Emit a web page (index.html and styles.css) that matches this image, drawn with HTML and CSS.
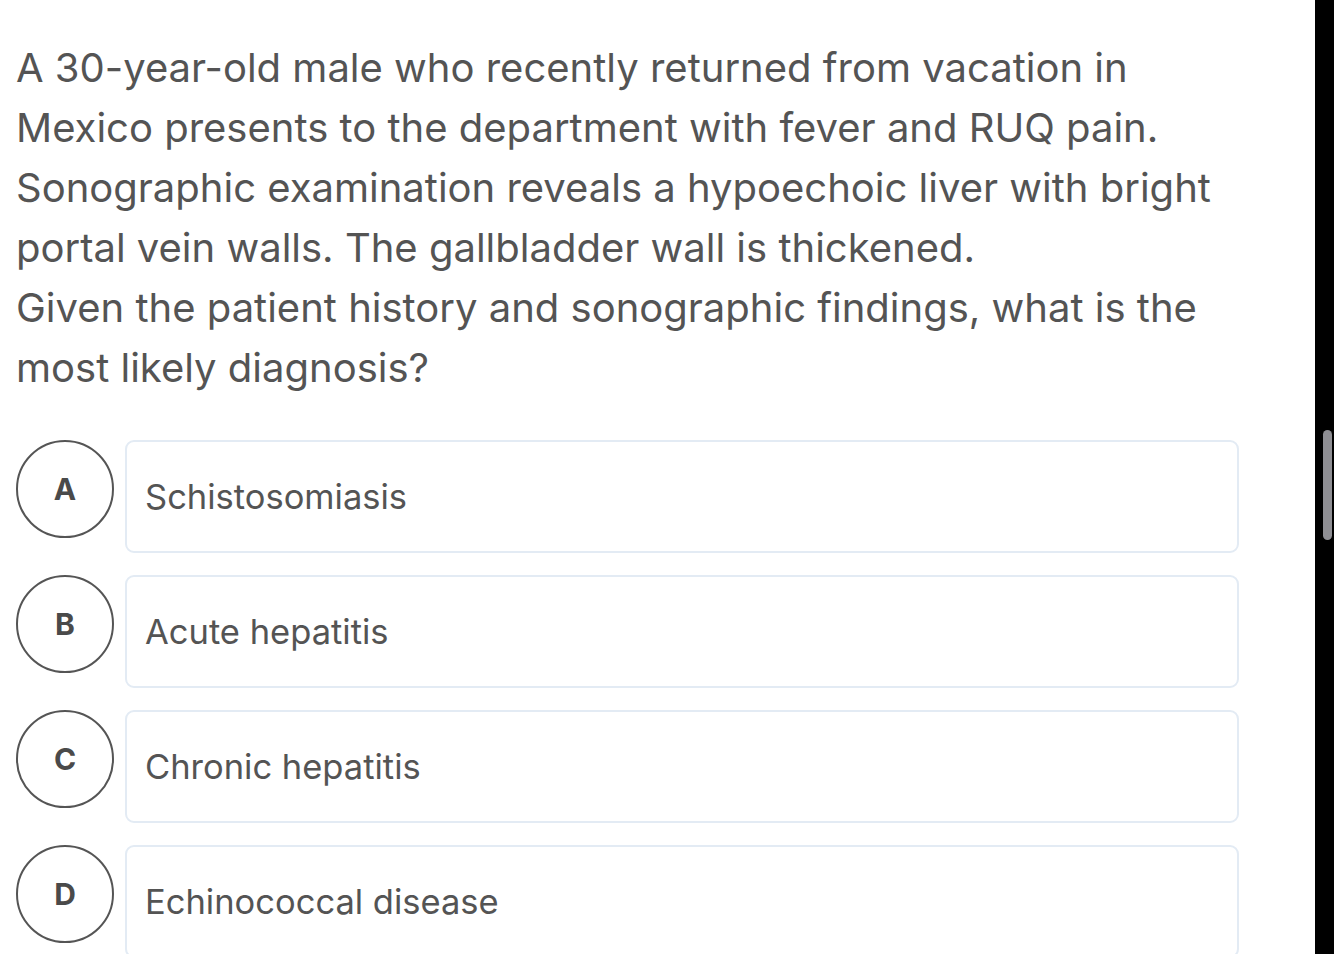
FILE: index.html
```html
<!DOCTYPE html>
<html>
<head>
<meta charset="utf-8">
<link rel="stylesheet" href="styles.css">
</head>
<body>
<div class="page">
  <main class="content">
    <div class="question">
      <p>A 30-year-old male who recently returned from vacation in Mexico presents to the department with fever and RUQ pain. Sonographic examination reveals a hypoechoic liver with bright portal vein walls. The gallbladder wall is thickened.</p>
      <p>Given the patient history and sonographic findings, what is the most likely diagnosis?</p>
    </div>
    <div class="options">
      <div class="option">
        <div class="letter">A</div>
        <div class="answer">Schistosomiasis</div>
      </div>
      <div class="option">
        <div class="letter">B</div>
        <div class="answer">Acute hepatitis</div>
      </div>
      <div class="option">
        <div class="letter">C</div>
        <div class="answer">Chronic hepatitis</div>
      </div>
      <div class="option">
        <div class="letter">D</div>
        <div class="answer">Echinococcal disease</div>
      </div>
    </div>
  </main>
  <aside class="scrollbar">
    <div class="thumb"></div>
  </aside>
</div>
</body>
</html>
```

FILE: styles.css
```css
html, body {
  margin: 0;
  padding: 0;
  background: #ffffff;
  height: 100%;
  overflow: hidden;
}
.page {
  display: flex;
  height: 954px;
  font-family: Inter, "Noto Sans", sans-serif;
  color: #545454;
}
.content {
  flex: 1;
  padding: 38px 0 0 16px;
  overflow: hidden;
}
.question p {
  margin: 0;
  font-size: 40px;
  line-height: 60px;
  width: 1223px;
}
.options {
  margin-top: 42px;
  display: flex;
  flex-direction: column;
  gap: 22px;
  width: 1223px;
}
.option {
  display: flex;
  align-items: flex-start;
  gap: 11px;
}
.letter {
  flex: none;
  width: 94px;
  height: 94px;
  border: 2px solid #555555;
  border-radius: 50%;
  display: flex;
  align-items: center;
  justify-content: center;
  font-size: 30px;
  font-weight: 700;
  color: #4a4a4a;
}
.answer {
  flex: 1;
  height: 109px;
  border: 2px solid #e3ebf4;
  border-radius: 9px;
  display: flex;
  align-items: center;
  padding-left: 18px;
  font-size: 34.5px;
}
.scrollbar {
  flex: none;
  width: 19px;
  background: #000000;
  position: relative;
}
.thumb {
  position: absolute;
  left: 8px;
  top: 430px;
  width: 9px;
  height: 110px;
  border-radius: 5px;
  background: #8e8e93;
}
```
